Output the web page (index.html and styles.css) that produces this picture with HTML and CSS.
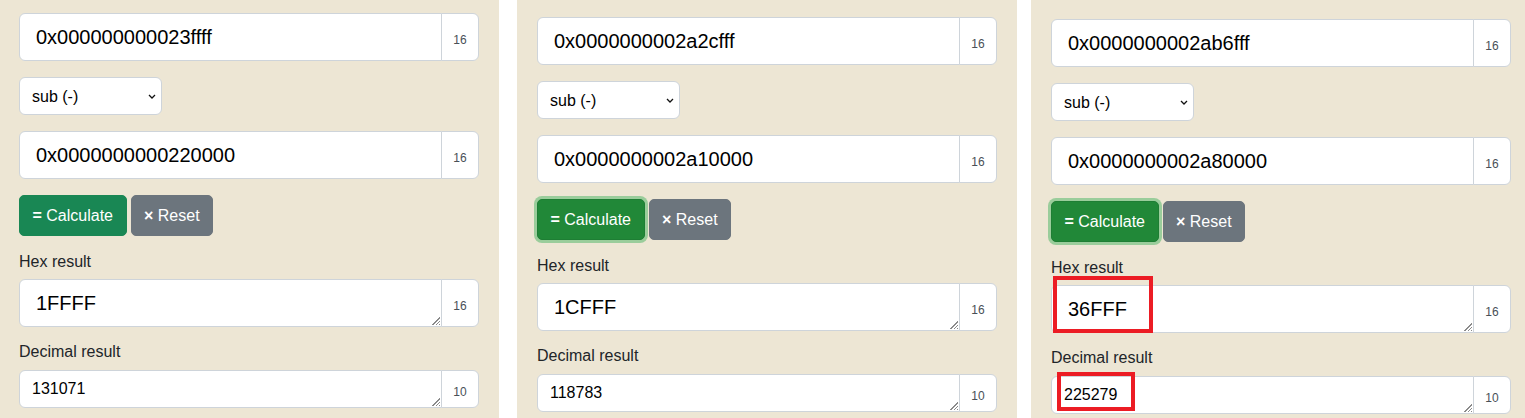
FILE: index.html
```html
<!DOCTYPE html>
<html lang="en">
<head>
<meta charset="utf-8">
<title>Hex calculator</title>
<link rel="stylesheet" href="styles.css">
</head>
<body>
<div class="page">
  <section class="panel panel-a">
    <div class="group">
      <input class="field field-lg" value="0x000000000023ffff">
      <span class="addon addon-lg">16</span>
    </div>
    <div class="select-wrap">
      <select class="op"><option>sub (-)</option></select>
      <svg class="chev" width="8" height="5" viewBox="0 0 8 5"><path d="M1 1 L4 4 L7 1" fill="none" stroke="#111" stroke-width="1.3"/></svg>
    </div>
    <div class="group">
      <input class="field field-lg" value="0x0000000000220000">
      <span class="addon addon-lg">16</span>
    </div>
    <div class="actions">
      <button class="btn btn-calc"><b>=</b> Calculate</button>
      <button class="btn btn-reset"><b>×</b> Reset</button>
    </div>
    <label class="label label-hex">Hex result</label>
    <div class="group">
      <textarea class="field field-lg area" rows="1">1FFFF</textarea>
      <span class="addon addon-lg">16</span>
      <span class="grip"></span>
    </div>
    <label class="label label-dec">Decimal result</label>
    <div class="group">
      <textarea class="field field-sm area" rows="1">131071</textarea>
      <span class="addon addon-sm">10</span>
      <span class="grip"></span>
    </div>
  </section>

  <section class="panel panel-b">
    <div class="group">
      <input class="field field-lg" value="0x0000000002a2cfff">
      <span class="addon addon-lg">16</span>
    </div>
    <div class="select-wrap">
      <select class="op"><option>sub (-)</option></select>
      <svg class="chev" width="8" height="5" viewBox="0 0 8 5"><path d="M1 1 L4 4 L7 1" fill="none" stroke="#111" stroke-width="1.3"/></svg>
    </div>
    <div class="group">
      <input class="field field-lg" value="0x0000000002a10000">
      <span class="addon addon-lg">16</span>
    </div>
    <div class="actions">
      <button class="btn btn-calc btn-focus"><b>=</b> Calculate</button>
      <button class="btn btn-reset"><b>×</b> Reset</button>
    </div>
    <label class="label label-hex">Hex result</label>
    <div class="group">
      <textarea class="field field-lg area" rows="1">1CFFF</textarea>
      <span class="addon addon-lg">16</span>
      <span class="grip"></span>
    </div>
    <label class="label label-dec">Decimal result</label>
    <div class="group">
      <textarea class="field field-sm area" rows="1">118783</textarea>
      <span class="addon addon-sm">10</span>
      <span class="grip"></span>
    </div>
  </section>

  <section class="panel panel-c">
    <div class="group">
      <input class="field field-lg" value="0x0000000002ab6fff">
      <span class="addon addon-lg">16</span>
    </div>
    <div class="select-wrap">
      <select class="op"><option>sub (-)</option></select>
      <svg class="chev" width="8" height="5" viewBox="0 0 8 5"><path d="M1 1 L4 4 L7 1" fill="none" stroke="#111" stroke-width="1.3"/></svg>
    </div>
    <div class="group">
      <input class="field field-lg" value="0x0000000002a80000">
      <span class="addon addon-lg">16</span>
    </div>
    <div class="actions">
      <button class="btn btn-calc btn-focus"><b>=</b> Calculate</button>
      <button class="btn btn-reset"><b>×</b> Reset</button>
    </div>
    <label class="label label-hex">Hex result</label>
    <div class="group">
      <textarea class="field field-lg area" rows="1">36FFF</textarea>
      <span class="addon addon-lg">16</span>
      <span class="grip"></span>
      <span class="mark mark-hex"></span>
    </div>
    <label class="label label-dec">Decimal result</label>
    <div class="group">
      <textarea class="field field-sm area" rows="1">225279</textarea>
      <span class="addon addon-sm">10</span>
      <span class="grip"></span>
      <span class="mark mark-dec"></span>
    </div>
  </section>
</div>
</body>
</html>
```

FILE: styles.css
```css
* { box-sizing: border-box; }

html, body {
  margin: 0;
  padding: 0;
  background: #ffffff;
  font-family: "Liberation Sans", Arial, sans-serif;
  color: #212529;
}

.page {
  display: flex;
  height: 418px;
  overflow: hidden;
}

.panel {
  background: #ede6d4;
  display: flex;
  flex-direction: column;
  align-items: flex-start;
}

.panel-a { width: 499px; padding: 13px 20px 0 19px; }
.panel-b { width: 500px; margin-left: 18px; padding: 17px 20px 0 20px; }
.panel-c { width: 494px; margin-left: 14px; padding: 19px 14px 0 20px; }

.group {
  position: relative;
  display: flex;
  width: 460px;
}

.field {
  flex: 1;
  min-width: 0;
  margin: 0;
  border: 1px solid #ced4da;
  border-radius: 6px 0 0 6px;
  background: #fff;
  color: #000;
  font-family: "Liberation Sans", Arial, sans-serif;
  outline: none;
}

.field-lg {
  height: 48px;
  padding: 8px 16px;
  font-size: 20px;
  line-height: 30px;
}

.field-sm {
  height: 38px;
  padding: 6px 12px;
  font-size: 16px;
  line-height: 24px;
}

.area {
  overflow: hidden;
  resize: none;
  display: block;
}

.grip {
  position: absolute;
  right: 39px;
  bottom: 2px;
  width: 10px;
  height: 10px;
  background: repeating-linear-gradient(-45deg, #8a8a8a 0 1px, transparent 1px 2.4px);
  clip-path: polygon(100% 0, 100% 100%, 0 100%);
  pointer-events: none;
}

.addon {
  width: 38px;
  margin-left: -1px;
  border: 1px solid #ced4da;
  border-radius: 0 6px 6px 0;
  background: #fff;
  color: #495057;
  font-size: 12px;
  text-align: center;
  padding-top: 6px;
}

.addon-lg { height: 48px; line-height: 40px; }
.addon-sm { height: 38px; line-height: 30px; }

.select-wrap {
  position: relative;
  margin-top: 16px;
  margin-bottom: 16px;
}

.op {
  display: block;
  appearance: none;
  -webkit-appearance: none;
  width: 143px;
  height: 38px;
  padding: 0 24px 0 12px;
  border: 1px solid #ced4da;
  border-radius: 6px;
  background: #fff;
  color: #000;
  font-family: "Liberation Sans", Arial, sans-serif;
  font-size: 16px;
  outline: none;
}

.chev {
  position: absolute;
  left: 129px;
  top: 17px;
  pointer-events: none;
}

.actions {
  display: flex;
  gap: 4px;
  margin-top: 16px;
}

.btn {
  height: 41px;
  padding: 0 12.5px;
  border: 1px solid transparent;
  border-radius: 5px;
  color: #fff;
  font-family: "Liberation Sans", Arial, sans-serif;
  font-size: 16px;
  line-height: 24px;
  cursor: pointer;
}

.btn-calc { background: #198754; border-color: #198754; }
.btn-focus {
  background: #218838;
  border-color: #1e7e34;
  box-shadow: 0 0 0 3px rgba(72, 180, 97, 0.5);
}
.btn-reset { background: #6c757d; border-color: #6c757d; }

.label {
  display: block;
  font-size: 16px;
  line-height: 24px;
  color: #212529;
}

.label-hex { margin-top: 14px; margin-bottom: 5px; }
.label-dec { margin-top: 13px; margin-bottom: 6px; }

.mark {
  position: absolute;
  border: 4px solid #ec1c24;
  pointer-events: none;
}

.mark-hex { left: 2px; top: -9px; width: 100px; height: 57px; }
.mark-dec { left: 6px; top: -4px; width: 78px; height: 39px; }
```
